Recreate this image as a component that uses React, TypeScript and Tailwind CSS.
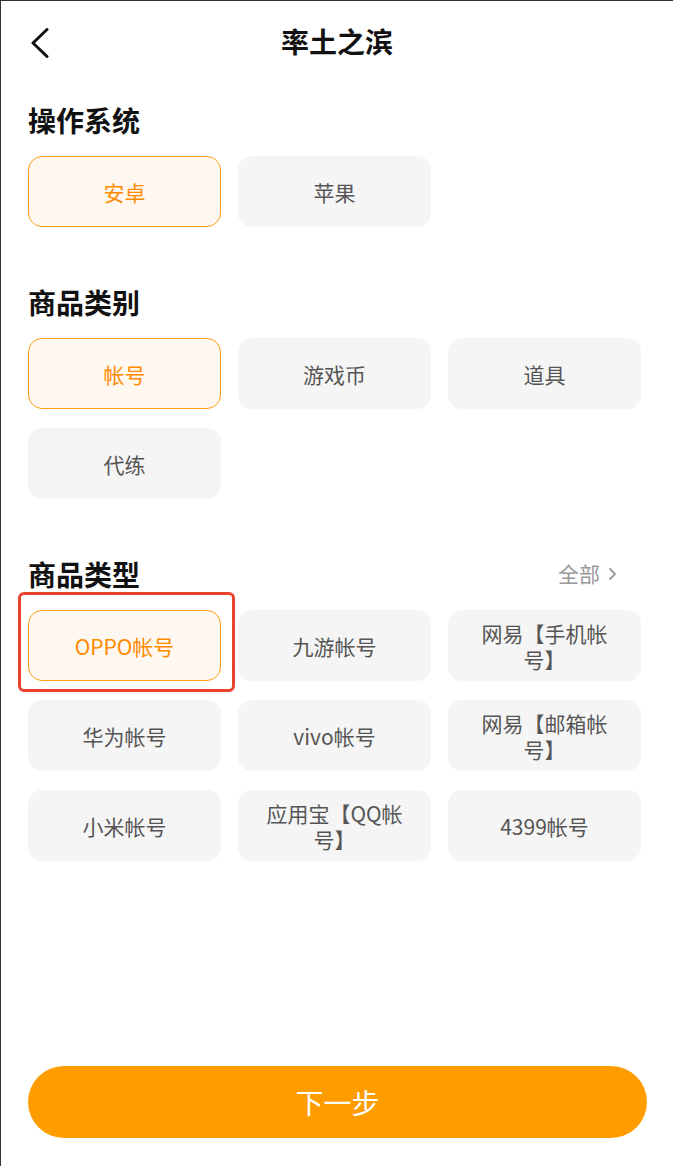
import React, { useState } from 'react'

const font = { fontFamily: '"Noto Sans CJK SC", "Noto Sans", sans-serif' }

interface OptionProps {
	label: string
	active?: boolean
	marked?: boolean
	onClick?: () => void
}

function Option({ label, active, marked, onClick }: OptionProps) {
	return (
		<div className="relative">
			<button
				onClick={onClick}
				className={
					active
						? 'flex h-[71px] w-full items-center justify-center rounded-[14px] border border-[#ff9f1a] bg-[#fff8f0] px-[22px] text-center text-[21px] leading-[26px] text-[#ff8a00]'
						: 'flex h-[71px] w-full items-center justify-center rounded-[14px] border border-transparent bg-[#f5f5f5] px-[22px] text-center text-[21px] leading-[26px] text-[#555555]'
				}
			>
				{label}
			</button>
			{marked && (
				<div className="pointer-events-none absolute -top-[18px] -right-[14px] -bottom-[11px] -left-[10px] rounded-[6px] border-[3px] border-[#e8432d]" />
			)}
		</div>
	)
}

function Section({
	title,
	extra,
	children,
}: {
	title: string
	extra?: React.ReactNode
	children: React.ReactNode
}) {
	return (
		<section>
			<div className="flex h-10 items-center justify-between pr-[56px]">
				<h2 className="text-[28px] font-bold text-[#111111]">{title}</h2>
				{extra}
			</div>
			<div className="mt-4 grid grid-cols-[193px_193px_193px] gap-x-[17px] gap-y-[19px]">
				{children}
			</div>
		</section>
	)
}

export default function App() {
	const [os, setOs] = useState('安卓')
	const [cat, setCat] = useState('帐号')
	const [type, setType] = useState('OPPO帐号')

	const types = [
		'OPPO帐号',
		'九游帐号',
		'网易【手机帐号】',
		'华为帐号',
		'vivo帐号',
		'网易【邮箱帐号】',
		'小米帐号',
		'应用宝【QQ帐号】',
		'4399帐号',
	]

	return (
		<div
			style={font}
			className="flex min-h-[1166px] flex-col border-t border-l border-[#333333] bg-white"
		>
			<header className="relative flex h-[80px] items-center justify-center">
				<button className="absolute top-[27px] left-[29px]">
					<svg width="20" height="30" viewBox="0 0 20 30" fill="none">
						<polyline
							points="17,1.5 3,15 17,28.5"
							stroke="#111"
							strokeWidth="3"
							strokeLinecap="round"
							strokeLinejoin="round"
						/>
					</svg>
				</button>
				<h1 className="text-[28px] font-bold text-[#111111]">率土之滨</h1>
			</header>

			<div className="mt-[19px] flex flex-col gap-[55px] pl-[27px]">
				<Section title="操作系统">
					{['安卓', '苹果'].map((o) => (
						<Option key={o} label={o} active={os === o} onClick={() => setOs(o)} />
					))}
				</Section>

				<Section title="商品类别">
					{['帐号', '游戏币', '道具', '代练'].map((o) => (
						<Option key={o} label={o} active={cat === o} onClick={() => setCat(o)} />
					))}
				</Section>

				<Section
					title="商品类型"
					extra={
						<span className="flex items-center gap-[8px] text-[21px] text-[#999999]">
							全部
							<svg width="9" height="14" viewBox="0 0 9 14" fill="none">
								<polyline
									points="2,2 7,7 2,12"
									stroke="#999"
									strokeWidth="1.8"
									strokeLinecap="round"
									strokeLinejoin="round"
								/>
							</svg>
						</span>
					}
				>
					{types.map((o) => (
						<Option
							key={o}
							label={o}
							active={type === o}
							marked={o === 'OPPO帐号'}
							onClick={() => setType(o)}
						/>
					))}
				</Section>
			</div>

			<div className="mt-auto pr-[26px] pb-[28px] pl-[27px]">
				<button className="flex h-[72px] w-full items-center justify-center rounded-full bg-[#ff9c00] text-[28px] text-white">
					下一步
				</button>
			</div>
		</div>
	)
}
